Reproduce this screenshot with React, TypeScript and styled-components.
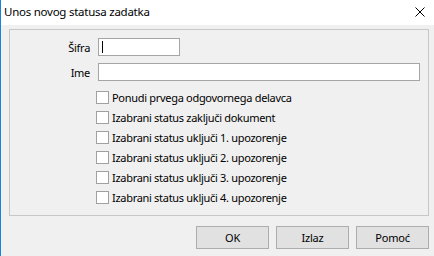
import React from "react";
import styled, { createGlobalStyle } from "styled-components";

const GlobalStyle = createGlobalStyle`
  html, body {
    margin: 0;
    padding: 0;
    background: #f0f0f0;
  }
  body {
    font-family: "Noto Sans", "Liberation Sans", sans-serif;
    font-size: 11px;
    letter-spacing: -0.3px;
    color: #000;
  }
`;

const Window = styled.div`
  width: 434px;
  height: 256px;
  box-sizing: border-box;
  border-left: 1px solid #1883d7;
  background: #f0f0f0;
  display: flex;
  flex-direction: column;
  overflow: hidden;
`;

const TitleBar = styled.div`
  height: 25px;
  flex-shrink: 0;
  background: #fff;
  display: flex;
  align-items: center;
  justify-content: space-between;
  padding: 0 9px 0 3px;
  font-size: 11.5px;
  letter-spacing: -0.25px;
`;

const Title = styled.span`
  line-height: 25px;
  margin-top: -2px;
`;

const CloseIcon = styled.svg`
  width: 10px;
  height: 10px;
  display: block;
  margin-top: -1px;
`;

const Body = styled.div`
  flex: 1;
  display: flex;
  flex-direction: column;
  padding: 4px 5px 7px 8px;
`;

const GroupBox = styled.div`
  flex: 1;
  border: 1px solid #c7c7c7;
  padding: 8px 8px 8px 0;
  display: flex;
  flex-direction: column;
`;

const FieldRow = styled.div`
  display: grid;
  grid-template-columns: 80px 1fr;
  column-gap: 8px;
  align-items: center;
  height: 18px;
  margin-bottom: 7px;
`;

const Label = styled.label`
  text-align: right;
`;

const TextInput = styled.div<{ $width?: number }>`
  height: 18px;
  box-sizing: border-box;
  border: 1px solid #a5a5a5;
  background: #fff;
  width: ${(p) => (p.$width ? `${p.$width}px` : "100%")};
  position: relative;
`;

const Caret = styled.span`
  position: absolute;
  left: 3px;
  top: 2px;
  width: 1px;
  height: 12px;
  background: #000;
`;

const CheckList = styled.div`
  display: flex;
  flex-direction: column;
  padding-left: 86px;
  margin-top: -1px;
`;

const CheckRow = styled.div`
  height: 20px;
  flex-shrink: 0;
  display: flex;
  align-items: center;
  gap: 3px;
`;

const Box = styled.span`
  width: 13px;
  height: 13px;
  box-sizing: border-box;
  border: 1px solid #a0a0a0;
  background: #fff;
  display: inline-block;
`;

const ButtonBar = styled.div`
  display: flex;
  justify-content: flex-end;
  gap: 7px;
  margin-top: 10px;
  flex-shrink: 0;
`;

const Button = styled.button`
  width: 73px;
  height: 23px;
  box-sizing: border-box;
  border: 1px solid #adadad;
  background: #e1e1e1;
  font-family: inherit;
  font-size: 11px;
  letter-spacing: -0.2px;
  color: #000;
  padding: 0;
`;

const checks = [
  "Ponudi prvega odgovornega delavca",
  "Izabrani status zaključi dokument",
  "Izabrani status uključi 1. upozorenje",
  "Izabrani status uključi 2. upozorenje",
  "Izabrani status uključi 3. upozorenje",
  "Izabrani status uključi 4. upozorenje",
];

export default function App() {
  return (
    <>
      <GlobalStyle />
      <Window>
        <TitleBar>
          <Title>Unos novog statusa zadatka</Title>
          <CloseIcon viewBox="0 0 10 10">
            <path d="M0.5 0.5 L9.5 9.5 M9.5 0.5 L0.5 9.5" stroke="#000" strokeWidth="1" fill="none" />
          </CloseIcon>
        </TitleBar>
        <Body>
          <GroupBox>
            <FieldRow>
              <Label>Šifra</Label>
              <TextInput $width={82}>
                <Caret />
              </TextInput>
            </FieldRow>
            <FieldRow>
              <Label>Ime</Label>
              <TextInput />
            </FieldRow>
            <CheckList>
              {checks.map((c) => (
                <CheckRow key={c}>
                  <Box />
                  <span>{c}</span>
                </CheckRow>
              ))}
            </CheckList>
          </GroupBox>
          <ButtonBar>
            <Button>OK</Button>
            <Button>Izlaz</Button>
            <Button>Pomoć</Button>
          </ButtonBar>
        </Body>
      </Window>
    </>
  );
}
